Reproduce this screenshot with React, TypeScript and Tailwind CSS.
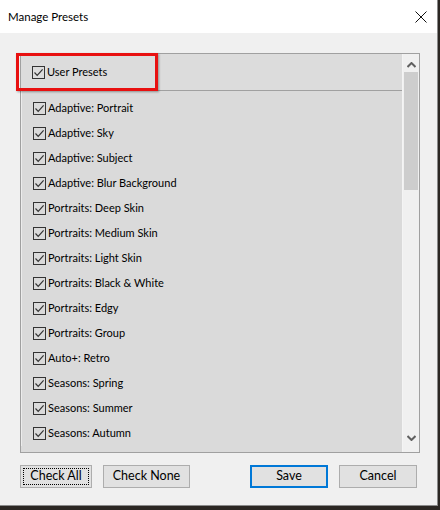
import React from "react";

const PRESETS = [
  "Adaptive: Portrait",
  "Adaptive: Sky",
  "Adaptive: Subject",
  "Adaptive: Blur Background",
  "Portraits: Deep Skin",
  "Portraits: Medium Skin",
  "Portraits: Light Skin",
  "Portraits: Black & White",
  "Portraits: Edgy",
  "Portraits: Group",
  "Auto+: Retro",
  "Seasons: Spring",
  "Seasons: Summer",
  "Seasons: Autumn",
];

function CheckBox() {
  return (
    <span className="flex h-[13px] w-[13px] shrink-0 items-center justify-center border border-[#333333]">
      <svg width="11" height="11" viewBox="0 0 11 11" fill="none">
        <path d="M1.5 5.5 L4.2 8.3 L9.6 2.4" stroke="#333333" strokeWidth="1.2" />
      </svg>
    </span>
  );
}

function Row({ label }: { label: string }) {
  return (
    <div className="flex h-[25px] items-center gap-[2px] pl-[11px]">
      <CheckBox />
      <span>{label}</span>
    </div>
  );
}

export default function App() {
  return (
    <div className="h-[510px] w-[440px] bg-[#2b2723]">
      <div
        className="relative flex h-[506px] w-[438px] flex-col border-r border-b border-[#8a8a8a] bg-[#f0f0f0] text-[11px] text-black"
        style={{ fontFamily: 'Lato, "Noto Sans", sans-serif' }}
      >
        {/* Title bar */}
        <div className="flex h-[33px] items-center justify-between bg-white pl-[8px] pr-[10px] pt-[1px]">
          <span className="text-[11.5px]">Manage Presets</span>
          <svg width="12" height="12" viewBox="0 0 12 12">
            <path d="M0.5 0.5 L11.5 11.5 M11.5 0.5 L0.5 11.5" stroke="#111" strokeWidth="1" />
          </svg>
        </div>

        {/* Client area */}
        <div className="flex flex-col px-[20px] pt-[20px]">
          <div className="flex h-[400px] w-[400px] border border-[#a0a0a0] bg-[#dadada]">
            <div className="flex flex-1 flex-col overflow-hidden border-r border-[#f4f4f4]">
              <div className="flex h-[37px] shrink-0 items-center gap-[2px] border-b border-[#a0a0a0] bg-[#dcdcdc] pl-[11px] pt-[1px]">
                <CheckBox />
                <span>User Presets</span>
              </div>
              <div className="flex flex-col border-l border-[#ececec] pt-[5px]">
                {PRESETS.map((p) => (
                  <Row key={p} label={p} />
                ))}
              </div>
            </div>
            {/* Scrollbar */}
            <div className="flex w-[16px] flex-col items-center bg-[#f0f0f0]">
              <div className="flex h-[18px] w-full items-end justify-center pb-[4px]">
                <svg width="9" height="6" viewBox="0 0 9 6">
                  <path d="M0.5 5 L4.5 1 L8.5 5" stroke="#606060" strokeWidth="2" fill="none" />
                </svg>
              </div>
              <div className="h-[118px] w-[14px] bg-[#cdcdcd]" />
              <div className="flex-1" />
              <div className="flex h-[18px] w-full items-start justify-center pt-[1px]">
                <svg width="9" height="6" viewBox="0 0 9 6">
                  <path d="M0.5 1 L4.5 5 L8.5 1" stroke="#606060" strokeWidth="2" fill="none" />
                </svg>
              </div>
            </div>
          </div>

          {/* Buttons */}
          <div className="mt-[12px] flex h-[23px] items-center text-[12.5px]">
            <button className="relative h-[23px] w-[72px] border border-[#adadad] bg-[#e1e1e1]">
              <span className="absolute inset-[2px] border border-dotted border-black" />
              Check All
            </button>
            <button className="ml-[11px] h-[23px] w-[87px] border border-[#adadad] bg-[#e1e1e1]">
              Check None
            </button>
            <div className="flex-1" />
            <button className="h-[23px] w-[78px] border-2 border-[#0078d7] bg-[#e1e1e1]">Save</button>
            <button className="ml-[11px] h-[23px] w-[78px] border border-[#adadad] bg-[#e1e1e1]">
              Cancel
            </button>
          </div>
        </div>

        {/* Red highlight annotation */}
        <div className="pointer-events-none absolute left-[16px] top-[53px] h-[38px] w-[142px] border-[3px] border-[#e81010] shadow-[1px_1px_2px_rgba(0,0,0,0.35)]" />
      </div>
    </div>
  );
}
